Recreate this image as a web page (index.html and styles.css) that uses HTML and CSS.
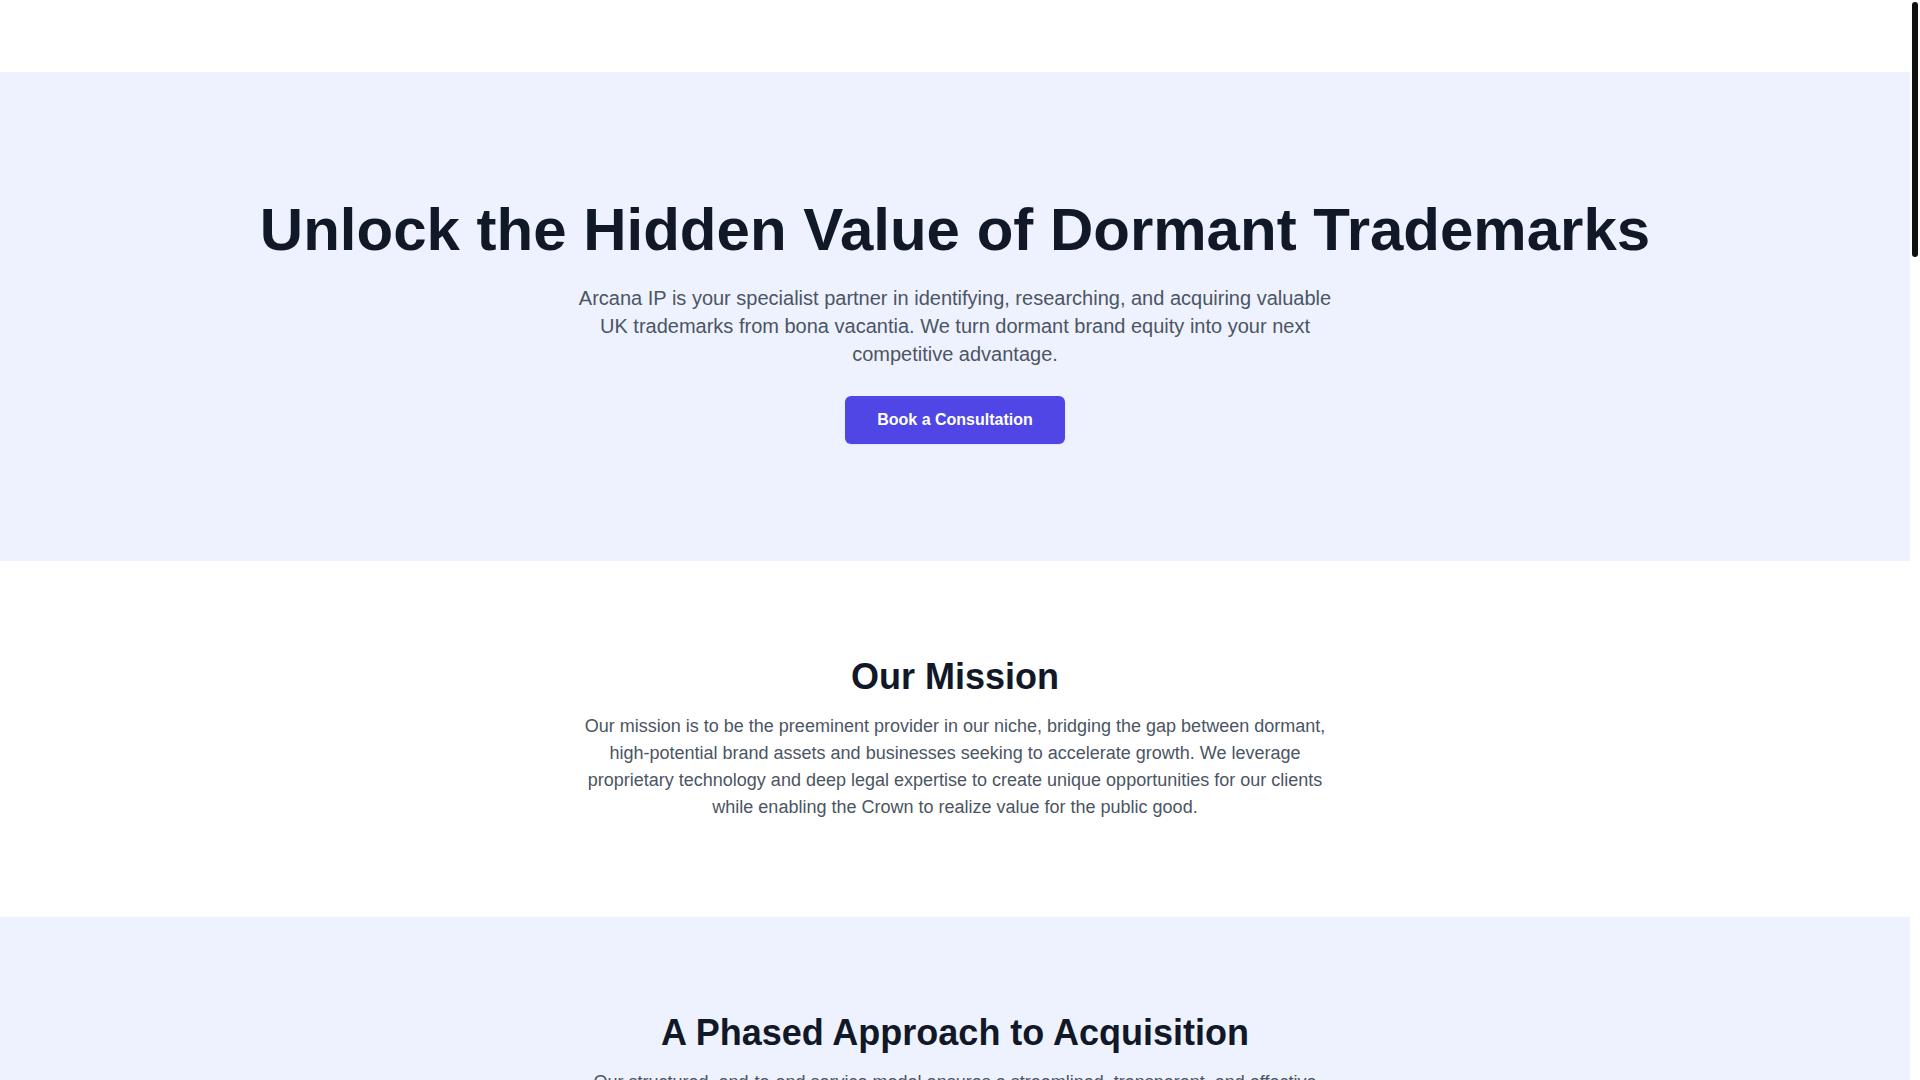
FILE: index.html
```html
<!DOCTYPE html>
<html lang="en">
<head>
<meta charset="utf-8">
<title>Arcana IP</title>
<link rel="stylesheet" href="styles.css">
</head>
<body>
<div class="scroll-thumb" aria-hidden="true"></div>
<div class="page">
<header class="site-header"></header>

<section class="hero">
  <h1 class="hero-title">Unlock the Hidden Value of Dormant Trademarks</h1>
  <p class="hero-text">Arcana IP is your specialist partner in identifying, researching, and acquiring valuable UK trademarks from bona vacantia. We turn dormant brand equity into your next competitive advantage.</p>
  <div class="hero-actions">
    <a class="btn" href="#contact">Book a Consultation</a>
  </div>
</section>

<section class="section">
  <h2 class="section-title">Our Mission</h2>
  <p class="section-text">Our mission is to be the preeminent provider in our niche, bridging the gap between dormant, high-potential brand assets and businesses seeking to accelerate growth. We leverage proprietary technology and deep legal expertise to create unique opportunities for our clients while enabling the Crown to realize value for the public good.</p>
</section>

<section class="section section-tint">
  <h2 class="section-title">A Phased Approach to Acquisition</h2>
  <p class="section-text">Our structured, end-to-end service model ensures a streamlined, transparent, and effective acquisition process, from initial discovery through to final registration.</p>
  <div class="cards">
    <div class="card"><div class="card-num">1</div><h3 class="card-title">Discovery</h3><p class="card-text">We identify dormant trademarks held as bona vacantia that match your sector and strategy.</p></div>
    <div class="card"><div class="card-num">2</div><h3 class="card-title">Research</h3><p class="card-text">Our team conducts thorough due diligence on history, status and commercial potential.</p></div>
    <div class="card"><div class="card-num">3</div><h3 class="card-title">Negotiation</h3><p class="card-text">We manage all engagement with the Crown representatives on your behalf.</p></div>
    <div class="card"><div class="card-num">4</div><h3 class="card-title">Acquisition</h3><p class="card-text">We complete the transfer and registration so the brand is ready for you to use.</p></div>
  </div>
</section>

<section class="section">
  <h2 class="section-title">Why Choose Arcana IP</h2>
  <p class="section-text">Specialist knowledge, proprietary data and a transparent fee structure make us the trusted partner for dormant brand acquisition.</p>
  <div class="cards cards-3">
    <div class="card card-plain"><h3 class="card-title">Proprietary Technology</h3><p class="card-text">Our platform continuously monitors dissolved companies and their trademark portfolios.</p></div>
    <div class="card card-plain"><h3 class="card-title">Legal Expertise</h3><p class="card-text">Deep experience in intellectual property law and bona vacantia procedures.</p></div>
    <div class="card card-plain"><h3 class="card-title">Transparent Process</h3><p class="card-text">Clear milestones and fixed fees, with no hidden costs along the way.</p></div>
  </div>
</section>

<section class="section section-tint">
  <h2 class="section-title">Who We Work With</h2>
  <p class="section-text">Entrepreneurs, growing businesses, brand investors and established companies looking to revive heritage names with proven recognition.</p>
  <div class="cards cards-3">
    <div class="card"><h3 class="card-title">Entrepreneurs</h3><p class="card-text">Launch with a name that already carries history and recognition.</p></div>
    <div class="card"><h3 class="card-title">Growing Businesses</h3><p class="card-text">Expand into new markets with an established brand identity.</p></div>
    <div class="card"><h3 class="card-title">Brand Investors</h3><p class="card-text">Build a portfolio of revived brands with latent value.</p></div>
  </div>
</section>

<section class="section">
  <h2 class="section-title">Frequently Asked Questions</h2>
  <div class="faq">
    <div class="faq-item"><h3 class="card-title">What is bona vacantia?</h3><p class="card-text">Bona vacantia means ownerless property. When a UK company is dissolved, its remaining assets, including trademarks, pass to the Crown.</p></div>
    <div class="faq-item"><h3 class="card-title">Can any trademark be acquired?</h3><p class="card-text">Only trademarks that have vested in the Crown and are offered for sale can be acquired. We help you identify which ones are available.</p></div>
    <div class="faq-item"><h3 class="card-title">How long does the process take?</h3><p class="card-text">Timelines vary, but most acquisitions complete within a few months from initial discovery.</p></div>
    <div class="faq-item"><h3 class="card-title">What does it cost?</h3><p class="card-text">We operate a transparent fee structure agreed in advance, with no hidden costs.</p></div>
  </div>
</section>

<section class="section section-tint" id="contact">
  <h2 class="section-title">Ready to Get Started?</h2>
  <p class="section-text section-text-gap">Book a consultation with our team to discuss your goals and discover the dormant trademarks that could power your next venture.</p>
  <div class="hero-actions">
    <a class="btn" href="#contact">Book a Consultation</a>
  </div>
</section>

<footer class="site-footer">
  <p class="footer-text">&copy; 2024 Arcana IP. All rights reserved.</p>
</footer>
</div>
</body>
</html>
```

FILE: styles.css
```css
* { box-sizing: border-box; }
html, body {
  margin: 0;
  padding: 0;
}
body {
  font-family: "Liberation Sans", Arial, sans-serif;
  color: #111827;
  background: #ffffff;
}
.page {
  margin-right: 10px;
}
.scroll-thumb {
  position: fixed;
  top: 2px;
  right: 2px;
  width: 6px;
  height: 255px;
  border-radius: 3px;
  background: #111111;
  z-index: 10;
}
.site-header {
  height: 72px;
  background: #ffffff;
}
.hero {
  background: #eef2ff;
  padding: 128px 24px 117px;
  text-align: center;
}
.hero-title {
  margin: 0 0 24px;
  font-size: 60px;
  line-height: 60px;
  font-weight: 700;
  color: #111827;
}
.hero-text {
  margin: 0 auto 28px;
  max-width: 768px;
  font-size: 20px;
  line-height: 28px;
  color: #4b5563;
}
.hero-actions {
  display: flex;
  justify-content: center;
}
.btn {
  display: block;
  padding: 12px 32px;
  background: #4f46e5;
  color: #ffffff;
  font-size: 16px;
  line-height: 24px;
  font-weight: 700;
  text-decoration: none;
  border-radius: 6px;
  box-shadow: 0 1px 2px rgba(0,0,0,0.05);
}
.section {
  padding: 96px 24px;
  text-align: center;
  background: #ffffff;
}
.section-tint { background: #eef2ff; }
.section-title {
  margin: 0 0 16px;
  font-size: 36px;
  line-height: 40px;
  font-weight: 700;
  color: #111827;
}
.section-text {
  margin: 0 auto;
  max-width: 768px;
  font-size: 18px;
  line-height: 27px;
  color: #4b5563;
}
.section-text-gap { margin-bottom: 32px; }
.cards {
  display: grid;
  grid-template-columns: repeat(4, 1fr);
  gap: 32px;
  max-width: 1280px;
  margin: 64px auto 0;
  text-align: left;
}
.cards-3 { grid-template-columns: repeat(3, 1fr); }
.card {
  background: #ffffff;
  border-radius: 8px;
  padding: 32px;
  box-shadow: 0 1px 3px rgba(0,0,0,0.1);
  min-height: 340px;
}
.card-plain { background: #f9fafb; }
.card-num {
  width: 48px;
  height: 48px;
  border-radius: 50%;
  background: #4f46e5;
  color: #fff;
  font-weight: 700;
  font-size: 20px;
  display: flex;
  align-items: center;
  justify-content: center;
  margin-bottom: 24px;
}
.card-title {
  margin: 0 0 12px;
  font-size: 20px;
  line-height: 28px;
  font-weight: 700;
}
.card-text {
  margin: 0;
  font-size: 16px;
  line-height: 24px;
  color: #4b5563;
}
.faq {
  max-width: 768px;
  margin: 48px auto 0;
  display: flex;
  flex-direction: column;
  gap: 24px;
  text-align: left;
}
.faq-item {
  padding: 24px;
  border: 1px solid #e5e7eb;
  border-radius: 8px;
}
.site-footer {
  background: #111827;
  padding: 48px 24px;
  text-align: center;
}
.footer-text {
  margin: 0;
  color: #9ca3af;
  font-size: 14px;
  line-height: 20px;
}
```
